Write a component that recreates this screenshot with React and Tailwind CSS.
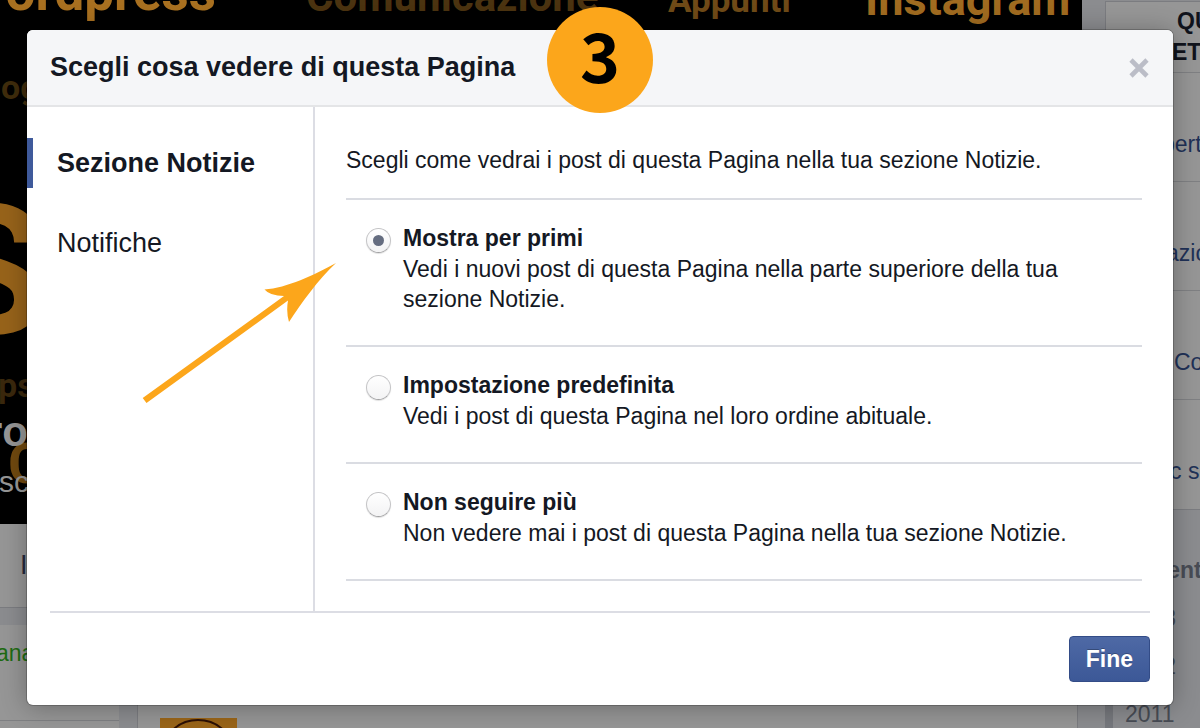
import { useState } from 'react';

const options = [
  {
    id: 'first',
    title: 'Mostra per primi',
    text: 'Vedi i nuovi post di questa Pagina nella parte superiore della tua sezione Notizie.',
  },
  {
    id: 'default',
    title: 'Impostazione predefinita',
    text: 'Vedi i post di questa Pagina nel loro ordine abituale.',
  },
  {
    id: 'unfollow',
    title: 'Non seguire più',
    text: 'Non vedere mai i post di questa Pagina nella tua sezione Notizie.',
  },
];

const sideLinks = [
  { text: 'pert', pad: 'pl-14' },
  { text: 'azio', pad: 'pl-[60px]' },
  { text: 'Co', pad: 'pl-[68px]' },
  { text: 'c su', pad: 'pl-16' },
];

// Word cloud in the cover photo
const words = [
  { text: 'Wordpress', cls: '-left-[40px] -top-[34px] text-[53px] text-[#a87020]' },
  { text: 'Comunicazione', cls: 'left-[306px] -top-[24px] text-[42px] text-[#4b3310]' },
  { text: 'Appunti', cls: 'left-[668px] -top-[17px] text-[35px] text-[#6f4a17]' },
  { text: 'Instagram', cls: 'left-[865px] -top-[23px] text-[45px] text-[#a06b20]' },
  { text: 'log', cls: '-left-[8px] top-[70px] text-[34px] text-[#3f2c0c]' },
  { text: 'S', cls: '-left-[64px] top-[182px] text-[180px] text-[#97631a]' },
  { text: 'ps', cls: '-left-[2px] top-[368px] text-[34px] text-[#3a280d]' },
  { text: 'C', cls: 'left-[8px] top-[436px] text-[56px] text-[#70490f]' },
];

function Backdrop() {
  return (
    <div className="absolute inset-0 flex overflow-hidden bg-[#8b8c8f]" aria-hidden="true">
      <div className="flex min-w-0 flex-1 flex-col">
        <div className="relative h-[524px] shrink-0 overflow-hidden bg-black">
          {words.map((w) => (
            <span key={w.text} className={`absolute whitespace-nowrap font-['Roboto',sans-serif] font-bold leading-none ${w.cls}`}>
              {w.text}
            </span>
          ))}
          <div className="absolute -left-[14px] top-[406px] text-[#969696]">
            <p className="text-[42px] font-bold leading-[52px]">ro</p>
            <p className="pl-[13px] text-[30px] leading-[48px]">sc</p>
          </div>
        </div>
        <div className="flex h-[84px] shrink-0 items-center border-b border-[#7b7c80] bg-[#969696] pl-5 text-[27px] text-[#252b3b]">
          I
        </div>
        <div className="mt-[17px] flex flex-1 gap-[18px]">
          <div className="w-[119px] bg-[#969696]">
            <p className="-ml-1 h-24 border-b border-[#7f8083] pt-3 text-[23px] leading-8 text-[#1f6b13]">ana</p>
          </div>
          <div className="mr-1 flex-1 border-x border-[#7b7c80] bg-[#969696] pl-[22px] pt-[93px]">
            <svg width="77" height="40" viewBox="0 0 77 40">
              <rect width="77" height="40" fill="#9a6519" />
              <ellipse cx="38" cy="30" rx="33" ry="28" fill="none" stroke="#2c1005" strokeWidth="2" />
            </svg>
          </div>
        </div>
      </div>
      <div className="ml-[23px] flex w-[95px] shrink-0 flex-col whitespace-nowrap text-[23px]">
        <div className="mt-px border-y border-l border-[#7b7c80] bg-[#969696]">
          <div className="h-[71px] border-b border-[#7f8083] pt-1 font-bold leading-[31px] text-[#10131c]">
            <p className="pl-[71px]">QU</p>
            <p className="pl-[66px]">ETI</p>
          </div>
          {sideLinks.map((l) => (
            <p key={l.text} className={`h-[109px] border-b border-[#7f8083] leading-[142px] text-[#1f3157] last:border-b-0 ${l.pad}`}>
              {l.text}
            </p>
          ))}
        </div>
        <div className="flex-1 border-l-8 border-[#76787d] pl-3 pt-9 leading-12 text-[#484c55]">
          <p className="font-bold">Recenti</p>
          <p>2013</p>
          <p>2012</p>
          <p>2011</p>
        </div>
      </div>
    </div>
  );
}

function Arrow() {
  return (
    <svg className="pointer-events-none absolute left-[142px] top-[262px]" width="196" height="142" viewBox="0 0 196 142" aria-hidden="true">
      <path d="M0.7 136 L142 34 Q128 34 122.5 27.5 C145 26 172 13 194 1 C176 18 160 40 147 60 Q144 50 146 38.5 L4.5 141 Z" fill="#fca61b" />
    </svg>
  );
}

export default function App() {
  const [section, setSection] = useState('news');
  const [choice, setChoice] = useState('first');

  return (
    <div className="relative min-h-screen overflow-hidden px-[27px] pb-[23px] pt-[30px] font-['Liberation_Sans',Arial,sans-serif] text-[#141823]">
      <Backdrop />

      <div role="dialog" aria-labelledby="dialog-title" className="relative rounded-md bg-white shadow-[0_2px_26px_rgba(0,0,0,0.3),0_0_0_1px_rgba(0,0,0,0.2)]">
        <header className="flex h-[77px] items-center justify-between rounded-t-md border-b-2 border-[#e4e5e7] bg-[#f5f6f8] px-[23px]">
          <h1 id="dialog-title" className="text-[27px] font-bold">Scegli cosa vedere di questa Pagina</h1>
          <button type="button" aria-label="Chiudi">
            <svg width="22" height="22" viewBox="0 0 22 22" stroke="#bbbdc7" strokeWidth="4.6">
              <path d="M3 3 L19 19 M19 3 L3 19" />
            </svg>
          </button>
        </header>

        <div className="flex">
          <nav className="flex w-[288px] shrink-0 flex-col gap-[30px] border-r-2 border-[#dcdde4] pt-[31px]">
            <button
              type="button"
              onClick={() => setSection('news')}
              className={`h-[50px] border-l-[6px] pl-6 text-left text-[27px] ${section === 'news' ? 'border-[#3f5a9b] font-bold' : 'border-transparent'}`}
            >
              Sezione Notizie
            </button>
            <button
              type="button"
              onClick={() => setSection('notifications')}
              className={`h-[50px] border-l-[6px] pl-6 text-left text-[27px] ${section === 'notifications' ? 'border-[#3f5a9b] font-bold' : 'border-transparent'}`}
            >
              Notifiche
            </button>
          </nav>

          <div className="flex-1 px-[31px] pb-[30px] pt-[38px] text-[23px] leading-[30px]">
            <p className="border-b-2 border-[#dadce2] pb-[23px]">
              Scegli come vedrai i post di questa Pagina nella tua sezione Notizie.
            </p>
            {options.map((o) => (
              <label key={o.id} className="flex gap-3 border-b-2 border-[#dadce2] pb-[31px] pl-5 pr-10 pt-[23px]">
                <input
                  type="radio"
                  name="visibility"
                  checked={choice === o.id}
                  onChange={() => setChoice(o.id)}
                  className="mt-[5px] grid size-[25px] shrink-0 appearance-none place-items-center rounded-full border border-[#c4c4c6] border-b-[#a2a2a4] bg-linear-to-b from-white to-[#f3f3f4] shadow-[0_1px_1px_rgba(0,0,0,0.12)] before:size-[11px] before:rounded-full checked:before:bg-[#656d80]"
                />
                <span>
                  <span className="block font-bold leading-[31px]">{o.title}</span>
                  <span className="block">{o.text}</span>
                </span>
              </label>
            ))}
          </div>
        </div>

        <footer className="mx-[23px] flex justify-end border-t-2 border-[#dcdde4] py-[23px]">
          <button
            type="button"
            className="h-[46px] rounded-[4px] border border-[#334c87] bg-linear-to-b from-[#4e69a5] to-[#3c5897] px-4 text-[23px] font-bold text-white [text-shadow:0_-1px_0_rgba(0,0,0,0.25)]"
          >
            Fine
          </button>
        </footer>
      </div>

      <div className="absolute left-1/2 top-[7px] flex size-[106px] -translate-x-1/2 items-center justify-center rounded-full bg-[#fca61b] pb-3 font-['Noto_Sans_CJK_JP',sans-serif] text-[68px] font-bold leading-none text-black">
        3
      </div>
      <Arrow />
    </div>
  );
}
